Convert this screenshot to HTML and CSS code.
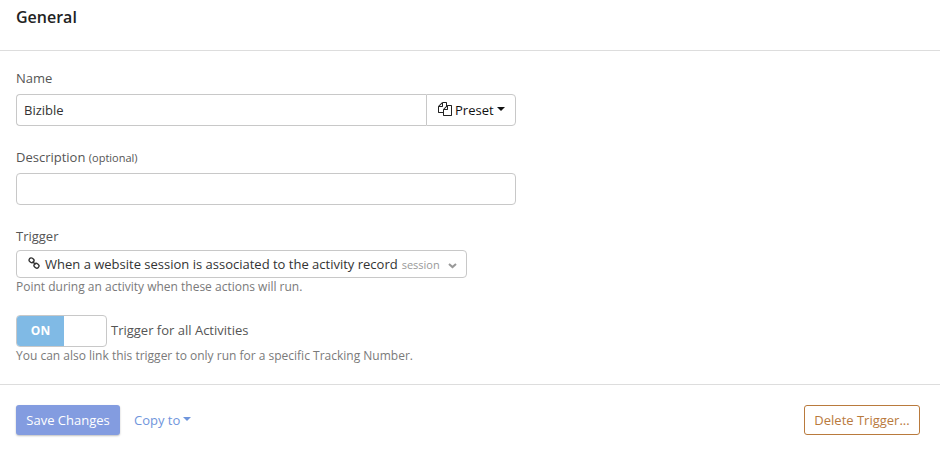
FILE: index.html
```html
<!DOCTYPE html>
<html>

	<head>
		<meta charset="utf-8">
		<title>Trigger</title>
		<link rel="stylesheet" href="styles.css">
	</head>

	<body>

		<div class="header">
			<h2>General</h2>
		</div>

		<form class="settings">
			<div class="field">
				<label class="field-label" for="name">Name</label>
				<div class="input-group">
					<input class="text-input" type="text" id="name" value="Bizible">
					<button class="preset-button" type="button">
						<svg class="copy-icon" width="14" height="14" viewBox="0 0 1792 1792">
							<path d="M1696 384q40 0 68 28t28 68v1216q0 40-28 68t-68 28h-960q-40 0-68-28t-28-68v-288h-544q-40 0-68-28t-28-68v-672q0-40 20-88t48-76l408-408q28-28 76-48t88-20h416q40 0 68 28t28 68v328q68-40 128-40h416zm-544 213l-299 299h299v-299zm-640-384l-299 299h299v-299zm196 647l316-316v-416h-384v416q0 40-28 68t-68 28h-416v640h512v-256q0-40 20-88t48-76zm956 804v-1152h-384v416q0 40-28 68t-68 28h-416v640h896z"/>
						</svg>
						<span>Preset</span>
						<span class="caret"></span>
					</button>
				</div>
			</div>

			<div class="field">
				<label class="field-label" for="description">Description <small>(optional)</small></label>
				<input class="text-input" type="text" id="description">
			</div>

			<div class="field trigger-field">
				<label class="field-label">Trigger</label>
				<div class="select">
					<svg class="link-icon" width="12" height="12" viewBox="0 0 12 12">
						<rect x="1" y="1.2" width="5" height="4.2" rx="1.9" transform="rotate(40 3.5 3.3)"/>
						<rect x="6" y="6.6" width="5" height="4.2" rx="1.9" transform="rotate(40 8.5 8.7)"/>
						<path d="M4.6 4.6l2.8 2.8"/>
					</svg>
					<span class="select-text">When a website session is associated to the activity record</span>
					<span class="select-type">session</span>
					<svg class="chevron" width="9" height="6" viewBox="0 0 9 6">
						<path d="M1 1l3.5 3L8 1"/>
					</svg>
				</div>
				<div class="help">Point during an activity when these actions will run.</div>
			</div>

			<div class="field">
				<div class="toggle-row">
					<div class="toggle"><span class="toggle-on">ON</span></div>
					<span class="toggle-label">Trigger for all Activities</span>
				</div>
				<div class="help">You can also link this trigger to only run for a specific Tracking Number.</div>
			</div>
		</form>

		<div class="footer">
			<button class="save-button">Save Changes</button>
			<a class="copy-link">Copy to <span class="caret"></span></a>
			<button class="delete-button">Delete Trigger...</button>
		</div>

	</body>

</html>
```

FILE: styles.css
```css
* {
	box-sizing: border-box;
	font-family: "Open Sans", sans-serif;
}

body {
	margin: 0;
	background: white;
	color: #555;
	font-size: 13px;
	line-height: 18px;
}

.header {
	height: 51px;
	padding: 6px 16px;
	border-bottom: 1px solid #ddd;
}

.header h2 {
	margin: 0;
	color: #222;
	font-size: 16px;
	font-weight: 600;
	line-height: 22px;
}

.settings {
	height: 333px;
	padding: 18px 16px 0;
}

.field {
	width: 500px;
	margin-bottom: 22px;
}

.trigger-field {
	margin-bottom: 19px;
}

.field-label {
	display: block;
	height: 25px;
}

.trigger-field .field-label {
	height: 23px;
}

.field-label small {
	font-size: 11px;
}

.input-group {
	display: flex;
}

.text-input {
	display: block;
	width: 100%;
	height: 32px;
	padding: 0 7px;
	border: 1px solid #c8c8c8;
	border-radius: 4px;
	color: #333;
	font-size: 13px;
}

.input-group .text-input {
	flex: 1;
	border-right: 0;
	border-radius: 4px 0 0 4px;
}

.preset-button {
	display: flex;
	align-items: center;
	width: 90px;
	height: 32px;
	padding: 0 0 0 10px;
	border: 1px solid #c8c8c8;
	border-radius: 0 4px 4px 0;
	background: white;
	color: #111;
	font-size: 13px;
	font-weight: 500;
}

.copy-icon {
	margin: -2px 3px 0 1px;
	fill: #222;
}

.caret {
	display: inline-block;
	margin: -2px 0 0 3px;
	border-top: 4.5px solid;
	border-left: 4px solid transparent;
	border-right: 4px solid transparent;
}

.select {
	display: flex;
	align-items: center;
	width: 451px;
	height: 28px;
	padding-left: 11px;
	border: 1px solid #c8c8c8;
	border-radius: 4px;
}

.link-icon {
	margin: -3px 5px 0 0;
	fill: none;
	stroke: #333;
	stroke-width: 1.4;
}

.select-text {
	color: #333;
	font-weight: 500;
}

.select-type {
	margin: 2px 0 0 4px;
	color: #999;
	font-size: 11px;
}

.chevron {
	margin: 3px 0 0 8px;
	fill: none;
	stroke: #999;
	stroke-width: 2.1;
}

.help {
	color: #7a7a7a;
	font-size: 12px;
	line-height: 18px;
}

.toggle-row {
	display: flex;
	align-items: center;
	gap: 4px;
}

.toggle {
	width: 91px;
	height: 32px;
	border: 1px solid #c8c8c8;
	border-radius: 4px;
	overflow: hidden;
}

.toggle-on {
	display: block;
	width: 47px;
	background: #80bae5;
	color: white;
	font-size: 12px;
	font-weight: 700;
	line-height: 30px;
	text-align: center;
}

.toggle-label {
	margin-top: -2px;
}

.footer {
	display: flex;
	align-items: center;
	padding: 20px 20px 14px 16px;
	border-top: 1px solid #ddd;
}

.save-button {
	width: 104px;
	height: 30px;
	padding: 0;
	border: 0;
	border-radius: 3px;
	background: #839ce0;
	box-shadow: 0 1px 2px rgba(0, 0, 0, 0.25);
	color: white;
	font-size: 13px;
	font-weight: 500;
}

.copy-link {
	display: flex;
	align-items: center;
	margin-left: 14px;
	color: #6f95dc;
	font-weight: 500;
}

.delete-button {
	width: 116px;
	height: 30px;
	margin-left: auto;
	padding: 0;
	border: 1px solid #b97a3d;
	border-radius: 3px;
	background: white;
	color: #b97a3d;
	font-size: 13px;
	font-weight: 500;
}
```
